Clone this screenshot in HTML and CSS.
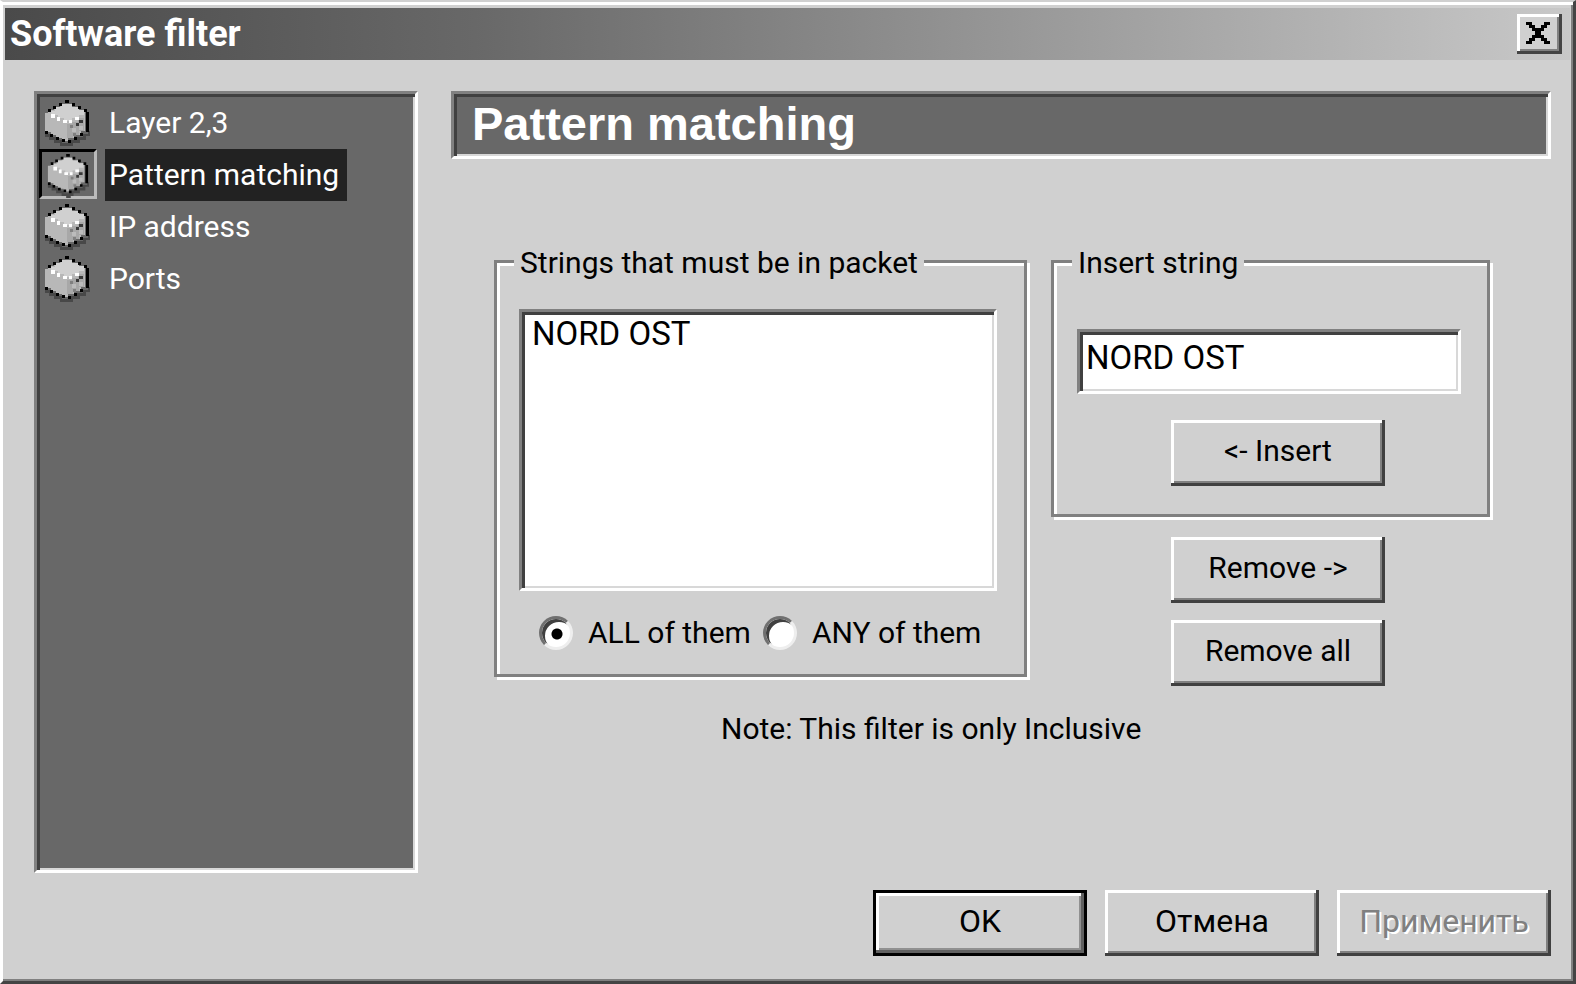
FILE: index.html
```html
<!DOCTYPE html>
<html lang="en">
<head>
<meta charset="utf-8">
<title>Software filter</title>
<link rel="stylesheet" href="styles.css">
</head>
<body>
<svg class="defs" width="0" height="0" aria-hidden="true">
  <symbol id="cube" viewBox="0 0 46 46">
    <path fill="#484848" d="M1 34h5v3h6v3h6v3h9v-3h6v-3h6v-3h5v-3h2v5h-4v4h-6v3h-7v3h-3v3h-5v-3h-5v-3h-6v-3H5v-3H1z"/>
    <path fill="#b8b8b8" d="M1 13h3v-3h6V7h6V4h12v3h6v3h7v21h-4v4h-7v3h-6v3h-6v-3h-6v-3h-5v-3H1z"/>
    <path fill="#d0d0d0" d="M11 7h6V4h11v3h7v3h5v5h-5v3h-7v3h-8v-3h-6v-3H7v-4h4z"/>
    <path fill="#a8a8a8" d="M23 24h5v-2h6v-4h6v13h-5v4h-6v3h-6z"/>
    <path fill="#bcbcbc" d="M28 28h4v4h-4zM35 26h4v4h-4z"/>
    <path fill="#fff" d="M7 14h4v4H7zM13 17h3v4h-3zM19 20h4v3h-4zM25 20h3v3h-3zM31 17h4v3h-4z"/>
    <path fill="#383838" d="M35 20h4v3h-4zM32 23h3v3h-3z"/>
    <path fill="#808080" d="M26 25h3v3h-3zM29 33h3v3h-3z"/>
    <path fill="#000" d="M21 0h4v3h-4zM15 3h3v3h-3zM28 3h3v3h-3zM9 6h3v3H9zM34 6h3v3h-3zM4 9h3v3H4zM40 9h3v3h-3zM42 12h3v20h-3zM1 31h3v3H1zM6 34h3v3H6zM12 37h3v3h-3zM18 39h3v3h-3zM24 40h3v3h-3zM30 37h3v3h-3zM36 33h3v3h-3z"/>
  </symbol>
</svg>
<main class="dialog">
  <header class="titlebar">
    <h1 class="title">Software filter</h1>
    <button class="close" type="button" aria-label="Close">
      <svg class="close-icon" viewBox="0 0 24 22" aria-hidden="true"><path d="M0 0h6v3h3v3h6V3h3V0h6v3h-3v3h-3v3h-3v4h3v3h3v3h3v3h-6v-3h-3v-3H9v3H6v3H0v-3h3v-3h3v-3h3V9H6V6H3V3H0z"/></svg>
    </button>
  </header>
  <div class="body">
    <nav class="pages sunken" aria-label="Filter pages">
      <button class="page" type="button"><span class="page-icon"><svg class="cube" aria-hidden="true"><use href="#cube"/></svg></span><span class="page-label">Layer 2,3</span></button>
      <button class="page selected" type="button" aria-current="page"><span class="page-icon"><svg class="cube" aria-hidden="true"><use href="#cube"/></svg></span><span class="page-label">Pattern matching</span></button>
      <button class="page" type="button"><span class="page-icon"><svg class="cube" aria-hidden="true"><use href="#cube"/></svg></span><span class="page-label">IP address</span></button>
      <button class="page" type="button"><span class="page-icon"><svg class="cube" aria-hidden="true"><use href="#cube"/></svg></span><span class="page-label">Ports</span></button>
    </nav>
    <section class="panel">
      <h2 class="banner sunken">Pattern matching</h2>
      <form class="content">
        <fieldset class="group strings">
          <legend>Strings that must be in packet</legend>
          <ul class="listbox sunken"><li>NORD OST</li></ul>
          <div class="radios">
            <label class="radio"><input type="radio" name="mode" checked>ALL of them</label>
            <label class="radio"><input type="radio" name="mode">ANY of them</label>
          </div>
        </fieldset>
        <div class="side">
          <fieldset class="group insert">
            <legend>Insert string</legend>
            <input class="field sunken" type="text" value="NORD OST" aria-label="Insert string">
            <button class="button" type="button">&lt;- Insert</button>
          </fieldset>
          <button class="button" type="button">Remove -&gt;</button>
          <button class="button" type="button">Remove all</button>
        </div>
      </form>
      <p class="note">Note: This filter is only Inclusive</p>
    </section>
  </div>
  <footer class="actions">
    <button class="button default" type="button">OK</button>
    <button class="button" type="button" lang="ru">Отмена</button>
    <button class="button" type="button" lang="ru" disabled>Применить</button>
  </footer>
</main>
</body>
</html>
```
FILE: styles.css
```css
* { box-sizing: border-box; }

body {
  margin: 0;
  background: #d0d0d0;
  color: #000;
  font: 30px/36px Roboto, "Liberation Sans", sans-serif;
}

button, input { font: inherit; color: inherit; }
.defs { position: absolute; }

.dialog {
  display: flex;
  flex-direction: column;
  min-height: 100vh;
  padding: 6px 3px 2px 2px;
  background: #d0d0d0;
  border-style: solid;
  border-width: 2px 3px 3px;
  border-color: #d0d0d0 #444 #444 #fff;
  box-shadow: inset 0 3px #fff, inset -2px -2px #808080;
}

.titlebar {
  display: flex;
  align-items: center;
  justify-content: space-between;
  height: 52px;
  padding: 0 8px 0 5px;
  background: linear-gradient(90deg, #4a4a4a, #686868 30%, #c8c8c8);
}
.title { margin: 0; color: #fff; font-size: 36px; font-weight: 700; }

.close {
  display: grid;
  place-items: center;
  width: 45px;
  height: 40px;
  padding: 0 3px 2px 0;
  background: #d0d0d0;
  border: 0;
  box-shadow: inset -3px -3px #444, inset 3px 3px #fff, inset -5px -5px #808080;
}
.close-icon { width: 24px; height: 22px; }

.sunken {
  background: #686868;
  border: 3px solid;
  border-color: #808080 #fff #fff #808080;
  box-shadow: inset 3px 3px #404040, inset -2px -2px #d8d8d8;
}

.body {
  display: flex;
  flex: 1;
  gap: 33px;
  padding: 31px 19px 17px 29px;
}

.pages {
  display: flex;
  flex: 0 0 384px;
  flex-direction: column;
  padding: 3px 2px;
}
.page {
  display: flex;
  gap: 8px;
  height: 52px;
  padding: 0;
  background: none;
  border: 0;
  color: #fff;
  text-align: left;
}
.page-icon {
  display: flex;
  width: 58px;
  height: 50px;
  padding: 3px 5px;
}
.cube { width: 46px; height: 46px; }
.page-label { padding: 8px 8px 8px 4px; }
.selected .page-icon {
  padding: 0 5px;
  border: 3px solid;
  border-color: #000 #bbb #bbb #000;
}
.selected .page-label { background: #222; }

.panel { flex: 1; }
.banner {
  height: 68px;
  margin: 0;
  padding: 0 18px;
  color: #fff;
  font: 700 47px/60px "Liberation Sans", sans-serif;
}

.content {
  display: grid;
  grid-template-columns: minmax(0, 533fr) minmax(0, 439fr);
  gap: 24px;
  align-items: start;
  padding: 84px 61px 0 43px;
}
.group {
  display: flex;
  flex-direction: column;
  min-width: 0;
  margin: 0;
  border: 3px solid #808080;
  box-shadow: 3px 3px #fff, inset 3px 3px #fff;
}
.group legend {
  margin-left: -5px;
  padding: 4px 6px 0;
  background: #d0d0d0;
  line-height: 32px;
}
.strings { padding: 30px 27px 23px 22px; }
.side {
  display: flex;
  flex-direction: column;
  align-items: flex-end;
  gap: 17px;
}
.side > .button { margin-right: 105px; }
.insert {
  align-self: stretch;
  align-items: flex-end;
  gap: 26px;
  margin-bottom: 3px;
  padding: 50px 26px 28px 23px;
}
.insert .button { margin-right: 76px; }

.listbox {
  height: 282px;
  margin: 0;
  padding: 4px 10px;
  background: #fff;
  font-size: 33px;
  list-style: none;
}
.field {
  display: block;
  width: 100%;
  height: 65px;
  padding: 0 6px 8px;
  background: #fff;
  border-radius: 0;
  font-size: 33px;
}

.radios { display: flex; gap: 12px; padding: 24px 0 0 20px; }
.radio { display: flex; align-items: center; gap: 15px; white-space: nowrap; }
.radio input {
  width: 34px;
  height: 34px;
  margin: 0;
  appearance: none;
  background: #fff;
  border: 3px solid;
  border-color: #707070 #eee #eee #707070;
  border-radius: 50%;
  box-shadow: inset 3px 3px #404040;
}
.radio input:checked { background: radial-gradient(circle at 15px 15px, #000 5px, #fff 6px); }

.button {
  width: 214px;
  height: 66px;
  padding: 0 0 4px;
  background: #d0d0d0;
  border: 0;
  box-shadow: inset -3px -3px #404040, inset 3px 3px #fff, inset -5px -5px #808080;
}
.default {
  border: 3px solid #000;
  box-shadow: inset -3px -3px #606060, inset 3px 3px #fff, inset -5px -5px #909090;
}
.button:disabled { color: #808080; text-shadow: 2px 2px #fff; }

.note { margin: 25px 0 0 270px; }

.actions {
  display: flex;
  justify-content: flex-end;
  gap: 18px;
  padding: 0 19px 23px;
  font-size: 32px;
}
```
